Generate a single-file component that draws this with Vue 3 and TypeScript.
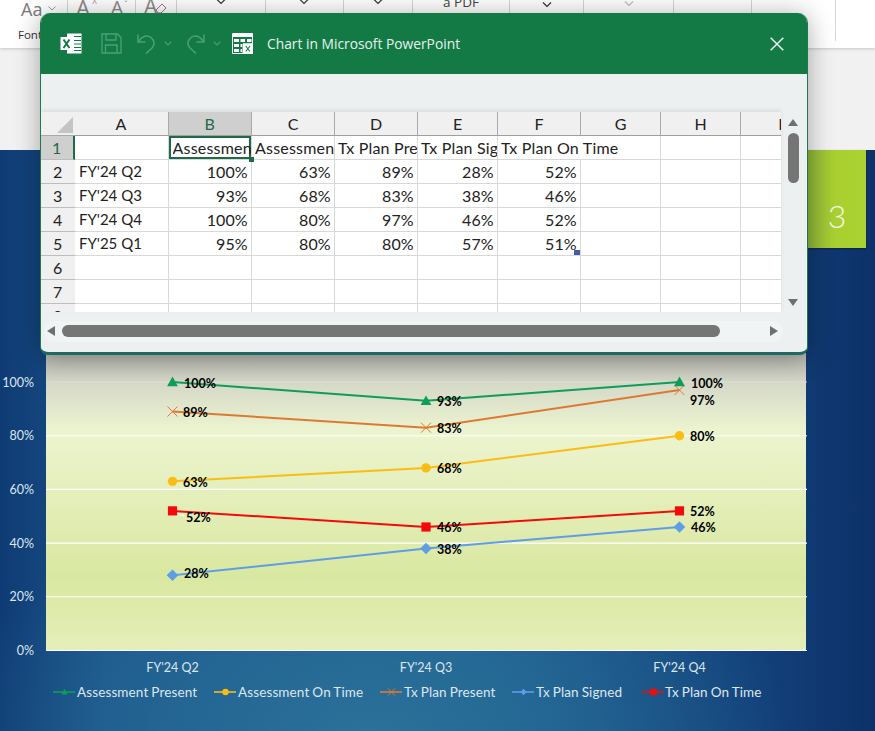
<script setup lang="ts">
const cols = ['A', 'B', 'C', 'D', 'E', 'F', 'G', 'H', 'I']
const rows: string[][] = [
  ['', 'Assessment Present', 'Assessment On Time', 'Tx Plan Present', 'Tx Plan Signed', 'Tx Plan On Time', '', '', ''],
  ["FY'24 Q2", '100%', '63%', '89%', '28%', '52%', '', '', ''],
  ["FY'24 Q3", '93%', '68%', '83%', '38%', '46%', '', '', ''],
  ["FY'24 Q4", '100%', '80%', '97%', '46%', '52%', '', '', ''],
  ["FY'25 Q1", '95%', '80%', '80%', '57%', '51%', '', '', ''],
  ['', '', '', '', '', '', '', '', ''],
  ['', '', '', '', '', '', '', '', ''],
  ['', '', '', '', '', '', '', '', ''],
]
const ribbonGroups = [
  { w: 68, cls: 'g-font', chev: 0 },
  { w: 68, cls: 'g-size', chev: 0 },
  { w: 41, cls: 'g-clear', chev: 0 },
  { w: 89, cls: 'g-chev', chev: 39 },
  { w: 78, cls: 'g-chev', chev: 33 },
  { w: 69, cls: 'g-chev', chev: 29 },
  { w: 97, cls: 'g-pdf', chev: 0 },
  { w: 74, cls: 'g-chev-dark', chev: 32 },
  { w: 90, cls: 'g-chev-light', chev: 40 },
  { w: 78, cls: '', chev: 0 },
  { w: 84, cls: '', chev: 0 },
]

const xs = [172.5, 426, 679.5]
const yOf = (v: number) => 650.5 - v * 2.685
const ticks = [0, 20, 40, 60, 80, 100]
const categories = ["FY'24 Q2", "FY'24 Q3", "FY'24 Q4"]
const leaders = [
  { x1: 174, y1: 511, x2: 184, y2: 516 },
  { x1: 177, y1: 574, x2: 184, y2: 573.5 },
]

interface Series {
  name: string
  color: string
  marker: string
  values: number[]
  labels: [number, number][]
  legendLine: number
  legendText: number
}
const series: Series[] = [
  { name: 'Tx Plan Signed', color: '#5f9ee6', marker: 'diamond', values: [28, 38, 46], labels: [[184, 573], [437, 549], [691, 527]], legendLine: 512, legendText: 536 },
  { name: 'Tx Plan Present', color: '#dd7a32', marker: 'x', values: [89, 83, 97], labels: [[183, 412], [437, 428], [690, 400]], legendLine: 380, legendText: 404 },
  { name: 'Assessment On Time', color: '#fbbc14', marker: 'circle', values: [63, 68, 80], labels: [[183, 482], [437, 468], [690, 436]], legendLine: 214, legendText: 238 },
  { name: 'Tx Plan On Time', color: '#f40a0a', marker: 'square', values: [52, 46, 52], labels: [[186, 517], [437, 527], [690, 511]], legendLine: 642, legendText: 665 },
  { name: 'Assessment Present', color: '#0f9d58', marker: 'triangle', values: [100, 93, 100], labels: [[184, 383], [437, 401], [691, 383]], legendLine: 53, legendText: 77 },
]
const pts = (s: Series) => s.values.map((v, i) => `${xs[i]},${yOf(v)}`).join(' ')
const marker = (kind: string, x: number, y: number, r: number) => {
  switch (kind) {
    case 'triangle': return `M${x} ${y - r}L${x + r} ${y + r * 0.8}L${x - r} ${y + r * 0.8}Z`
    case 'diamond': return `M${x} ${y - r}L${x + r} ${y}L${x} ${y + r}L${x - r} ${y}Z`
    case 'square': return `M${x - r} ${y - r}H${x + r}V${y + r}H${x - r}Z`
    case 'x': return `M${x - r} ${y - r}L${x + r} ${y + r}M${x + r} ${y - r}L${x - r} ${y + r}`
    default: return `M${x - r} ${y}A${r} ${r} 0 1 0 ${x + r} ${y}A${r} ${r} 0 1 0 ${x - r} ${y}Z`
  }
}
const markerSize: Record<string, number> = { x: 5, diamond: 5.8, square: 4.6, circle: 4.7, triangle: 5.4 }
</script>

<template>
  <div class="page">
    <header class="ribbon">
      <div v-for="(g, i) in ribbonGroups" :key="i" class="rgroup" :class="g.cls" :style="{ width: g.w + 'px' }">
        <template v-if="g.cls === 'g-font'">
          <span class="aa">Aa</span>
          <svg class="aa-chev" width="8" height="5" viewBox="0 0 8 5"><path d="M.5.5 4 4 7.5.5" fill="none" stroke="#9a9a9a" /></svg>
          <span class="font-label">Font</span>
        </template>
        <template v-else-if="g.cls === 'g-size'">
          <span class="big-a">A</span><span class="caret">^</span>
          <span class="small-a">A</span><span class="caret small">ˇ</span>
        </template>
        <template v-else-if="g.cls === 'g-clear'">
          <span class="clear-a">A</span>
          <svg class="pen" width="12" height="12" viewBox="0 0 12 12"><path d="M1 8 7 2l4 4-5 5H3Z" fill="none" stroke="#b06a86" /></svg>
        </template>
        <span v-else-if="g.cls === 'g-pdf'" class="pdf">a PDF</span>
        <svg v-else-if="g.chev" class="chev" :class="g.cls" :style="{ left: g.chev + 'px' }" width="10" height="6" viewBox="0 0 10 6"><path d="M1 .5 5 4.5 9 .5" fill="none" stroke="currentColor" stroke-width="1.2" /></svg>
      </div>
    </header>
    <div class="workspace"></div>

    <section class="slide">
      <svg class="chart" width="875" height="581" viewBox="0 150 875 581">
        <defs>
          <linearGradient id="plotFill" x1="0" y1="0" x2="0" y2="1">
            <stop offset="0" stop-color="#b4b5af" />
            <stop offset="0.1" stop-color="#d5d8c8" />
            <stop offset="0.26" stop-color="#ecf4cf" />
            <stop offset="0.55" stop-color="#e2edb4" />
            <stop offset="0.75" stop-color="#d9e8a0" />
            <stop offset="1" stop-color="#e5eeb9" />
          </linearGradient>
        </defs>
        <rect x="46" y="353" width="760" height="297.5" fill="url(#plotFill)" />
        <g v-for="t in ticks" :key="t">
          <line x1="46" x2="807" :y1="yOf(t)" :y2="yOf(t)" :stroke="t === 100 ? '#e3e3dc' : '#ffffff'" :stroke-width="t === 100 ? 0.8 : 1.1" />
          <text class="axis" x="34" :y="yOf(t) + 4.5" text-anchor="end">{{ t }}%</text>
        </g>
        <text v-for="(c, i) in categories" :key="c" class="axis" :x="xs[i]" y="672" text-anchor="middle">{{ c }}</text>

        <line v-for="(l, i) in leaders" :key="i" :x1="l.x1" :y1="l.y1" :x2="l.x2" :y2="l.y2" stroke="#fff" stroke-width="1" />
        <g v-for="s in series" :key="s.name">
          <polyline :points="pts(s)" fill="none" :stroke="s.color" stroke-width="2" />
          <g v-for="(v, i) in s.values" :key="i">
            <path
              :d="marker(s.marker, xs[i], yOf(v), markerSize[s.marker])"
              :fill="s.marker === 'x' ? 'none' : s.color"
              :stroke="s.marker === 'x' ? s.color : 'none'"
            />
            <text class="dlabel" :x="s.labels[i][0]" :y="s.labels[i][1] + 4.5">{{ v }}%</text>
          </g>
          <line :x1="s.legendLine" :x2="s.legendLine + 22" y1="692" y2="692" :stroke="s.color" stroke-width="1.6" />
          <path
            :d="marker(s.marker, s.legendLine + 11.5, 692, s.marker === 'x' ? 3.5 : 3.2)"
            :fill="s.marker === 'x' ? 'none' : s.color"
            :stroke="s.marker === 'x' ? s.color : 'none'"
          />
          <text class="legend" :x="s.legendText" y="696.5">{{ s.name }}</text>
        </g>
      </svg>
      <div class="tab">3</div>
    </section>

    <div class="window">
      <div class="titlebar">
        <svg class="tb-excel" width="22" height="21" viewBox="0 0 22 21">
          <path d="M7 0.5H21.5V20.5H7Z" fill="#fff" />
          <path d="M14 3.5H21M14 7.5H21M14 11H21M14 14.5H21M14 17.5H21" stroke="#137a46" stroke-width="1" />
          <path d="M0.5 4H13V17H0.5Z" fill="#fff" />
          <path d="M3.5 6.5 9.5 15M9.5 6.5 3.5 15" stroke="#137a46" stroke-width="2" />
        </svg>
        <svg class="tb-save" width="21" height="21" viewBox="0 0 21 21" fill="none" stroke="#4aa178" stroke-width="1.3">
          <path d="M1 1H16.5L20 4.5V20H1Z" />
          <path d="M5 1V7H15V1M4.5 20V12H16V20" />
        </svg>
        <svg class="tb-undo" width="19" height="21" viewBox="0 0 19 21" fill="none" stroke="#4aa178" stroke-width="1.5">
          <path d="M1 1.5V9H8.5" />
          <path d="M1.5 8.5C5 3 10 1.5 14 4.5C18 8 18 12 15 15L9 20.5" />
        </svg>
        <svg class="tb-drop" width="8" height="5" viewBox="0 0 8 5"><path d="M.7.7 4 4 7.3.7" fill="none" stroke="#4aa178" stroke-width="1.1" /></svg>
        <svg class="tb-redo" width="19" height="21" viewBox="0 0 19 21" fill="none" stroke="#4aa178" stroke-width="1.5">
          <path d="M18 1.5V9H10.5" />
          <path d="M17.5 8.5C14 3 9 1.5 5 4.5C1 8 1 12 4 15L10 20.5" />
        </svg>
        <svg class="tb-drop" width="8" height="5" viewBox="0 0 8 5"><path d="M.7.7 4 4 7.3.7" fill="none" stroke="#4aa178" stroke-width="1.1" /></svg>
        <svg class="tb-sheet" width="21" height="21" viewBox="0 0 21 21">
          <path d="M.5.5H20.5V11H11V20.5H.5Z" fill="none" stroke="#fff" />
          <path d="M.5 1H20.5V4H.5ZM2 6H7V9H2ZM8.5 6H13V9H8.5ZM15 6H19.5V9H15ZM2 11H7V14H2ZM2 16H7V19H2ZM8.5 11H10V14H8.5ZM8.5 16H10V19H8.5Z" fill="#fff" />
          <path d="M11 10.5H21V21H11Z" fill="#fff" />
          <path d="M13.7 13 18 18.5M18 13 13.7 18.5" stroke="#137a46" stroke-width="1.1" />
        </svg>
        <span class="tb-title">Chart in Microsoft PowerPoint</span>
        <svg class="tb-close" width="14" height="14" viewBox="0 0 14 14"><path d="M.7.7 13.3 13.3M13.3.7.7 13.3" stroke="#eaf4ee" stroke-width="1.5" /></svg>
      </div>
      <div class="panel"></div>

      <div class="sheet-row">
        <div class="sheet">
          <div class="corner"><span class="corner-tri"></span></div>
          <div v-for="(c, i) in cols" :key="c" class="chead" :class="{ selected: i === 1 }">{{ c }}</div>
          <template v-for="(row, r) in rows" :key="r">
            <div class="rhead" :class="{ selected: r === 0 }">{{ r + 1 }}</div>
            <div
              v-for="(val, c) in row"
              :key="c"
              class="cell"
              :class="{
                num: r > 0 && c > 0,
                active: r === 0 && c === 1,
                spill: r === 0 && c === 5,
                lead: r === 0 && c > 0,
                last: r === 4 && c === 5,
              }"
            >
              <span class="cell-text">{{ val }}</span>
            </div>
          </template>
        </div>
        <div class="vscroll">
          <span class="arrow up"></span>
          <span class="vthumb"></span>
          <span class="arrow down"></span>
        </div>
      </div>
      <div class="hscroll">
        <div class="htrack">
          <span class="arrow left"></span>
          <span class="hthumb"></span>
          <span class="arrow right"></span>
        </div>
      </div>
    </div>
  </div>
</template>

<style>
html, body { margin: 0; padding: 0; background: #0f3a73; }
</style>

<style scoped>
.page {
  position: relative;
  width: 875px;
  height: 731px;
  overflow: hidden;
  display: flex;
  flex-direction: column;
  font-family: "Open Sans", "Liberation Sans", sans-serif;
}

/* ribbon */
.ribbon {
  display: flex;
  height: 48px;
  flex: none;
  background: #fff;
  box-shadow: 0 1px 3px rgba(0, 0, 0, .18);
  position: relative;
  z-index: 1;
  overflow: hidden;
}
.rgroup {
  position: relative;
  flex: none;
  box-sizing: border-box;
  height: 41px;
  border-right: 1px solid #d6d6d6;
  font-family: "Open Sans", sans-serif;
}
.aa { position: absolute; left: 21px; top: -3px; font-size: 18px; color: #7a7a7a; }
.aa-chev { position: absolute; left: 48px; top: 6px; }
.font-label { position: absolute; left: 18px; top: 27px; font-size: 11.5px; color: #333; }
.big-a { position: absolute; left: 8px; top: -8px; font-size: 22px; color: #8a8a8a; }
.small-a { position: absolute; left: 43px; top: -6px; font-size: 19px; color: #8a8a8a; }
.caret { position: absolute; left: 24px; top: -4px; font-size: 9px; color: #8a8a8a; }
.caret.small { left: 56px; top: -2px; }
.clear-a { position: absolute; left: 8px; top: -8px; font-size: 21px; color: #8a8a8a; }
.pen { position: absolute; left: 19px; top: 2px; }
.chev { position: absolute; top: -1px; color: #333; }
.chev.g-chev-dark { top: 2px; }
.chev.g-chev-light { top: 1px; color: #bdbdbd; }
.pdf { position: absolute; left: 30px; top: -7px; font-size: 13.5px; color: #444; }
.workspace { height: 102px; flex: none; background: #f1f1f1; }

/* slide */
.slide {
  position: relative;
  flex: 1;
  background:
    radial-gradient(ellipse 420px 260px at 370px 590px, #2b7199 0%, rgba(43, 113, 153, .55) 50%, rgba(43, 113, 153, 0) 100%),
    linear-gradient(90deg, #0f3b74 0%, #1a548a 12%, #1a5a90 55%, #123f78 88%, #0d3168 100%);
}
.chart { display: block; }
.axis { font-family: "Lato", sans-serif; font-size: 12.5px; fill: #dce6ef; }
.legend { font-family: "Lato", sans-serif; font-size: 13.5px; fill: #dde7ef; letter-spacing: .12px; word-spacing: -.6px; }
.dlabel { font-family: "Lato", sans-serif; font-size: 12.5px; font-weight: 700; fill: #000; }
.tab {
  position: absolute;
  left: 808px;
  top: 0;
  width: 58px;
  height: 98px;
  box-sizing: border-box;
  padding-top: 47px;
  text-align: center;
  font-family: "Lato", sans-serif;
  font-weight: 300;
  font-size: 32px;
  line-height: 38px;
  color: #f4f8e6;
  background: linear-gradient(90deg, #8fb53b 0%, #a8cf30 45%, #abd32e 100%);
  box-shadow: 0 1px 2px rgba(0, 0, 0, .35);
}

/* window */
.window {
  position: absolute;
  left: 40px;
  top: 13px;
  width: 768px;
  height: 342px;
  box-sizing: border-box;
  border-radius: 10px 10px 8px 8px;
  background: #ecf0f1;
  border-left: 1px solid #1c7a4c;
  border-right: 1px solid #1c7a4c;
  border-bottom: 3px solid #1d6a62;
  box-shadow: 0 2px 26px rgba(0, 0, 0, .33);
  overflow: hidden;
  z-index: 2;
  display: flex;
  flex-direction: column;
}
.titlebar {
  height: 61px;
  flex: none;
  background: #137a46;
  margin: 0 -1px;
  display: flex;
  align-items: center;
  padding-left: 20px;
  box-sizing: border-box;
}
.tb-excel { margin-right: 19px; }
.tb-save { margin-right: 15px; }
.tb-undo { margin-right: 8px; }
.tb-drop { margin-right: 14px; }
.tb-redo { margin-right: 8px; }
.tb-drop + .tb-redo { margin-left: 0; }
.tb-sheet { margin-left: -3px; margin-right: 14px; }
.tb-title { color: #e7f3ec; font-size: 13.8px; }
.tb-close { margin-left: auto; margin-right: 24px; }
.panel { height: 38px; flex: none; background: #ecf0f1; }

.sheet-row { display: flex; height: 200px; flex: none; }
.sheet {
  width: 740px;
  flex: none;
  height: 200px;
  overflow: hidden;
  display: grid;
  grid-template-columns: 33.5px 94px 83.5px 83px 83px 80px 83px 80px 80px 80px;
  grid-auto-rows: 24px;
  grid-template-rows: 23.5px;
  background: #fff;
  font-family: "Lato", sans-serif;
  font-size: 16px;
  color: #222;
  box-shadow: 0 -2px 4px rgba(0, 0, 0, .08);
}
.corner { background: #f0f0f0; border-bottom: 1px solid #a9a9a9; position: relative; }
.corner-tri {
  position: absolute;
  right: 2px;
  bottom: 2px;
  width: 0;
  height: 0;
  border-left: 16px solid transparent;
  border-bottom: 16px solid #c4c4c4;
}
.chead {
  background: #f0f0f0;
  border-bottom: 1px solid #9f9f9f;
  border-right: 1px solid #a9a9a9;
  box-sizing: border-box;
  display: flex;
  align-items: center;
  justify-content: center;
}
.chead.selected { background: #cfcfcf; color: #1e6b47; }
.rhead {
  background: #f0f0f0;
  border-bottom: 1px solid #bdbdbd;
  box-sizing: border-box;
  display: flex;
  align-items: center;
  justify-content: center;
}
.rhead.selected { background: #cfcfcf; color: #1e6b47; border-right: 2px solid #1e6b47; }
.cell {
  position: relative;
  box-sizing: border-box;
  border-right: 1px solid #d8d8d8;
  border-bottom: 1px solid #d8d8d8;
  padding: 0 3.5px 0 4.5px;
  line-height: 23px;
  white-space: nowrap;
  overflow: hidden;
  font-size: 15px;
}
.cell.num { text-align: right; font-size: 16px; }
.cell.lead { padding: 0 0 0 3px; font-size: 16px; letter-spacing: .2px; }
.cell.spill { overflow: visible; border-right-color: transparent; z-index: 1; }
.cell.active {
  overflow: visible;
  box-shadow: inset 0 0 0 2px #1e6b47;
  padding-left: 4px;
}
.cell.active .cell-text { display: block; overflow: hidden; }
.cell.active::after {
  content: "";
  position: absolute;
  right: -3px;
  bottom: -3px;
  width: 5px;
  height: 5px;
  background: #1e6b47;
  z-index: 2;
}
.cell.last { overflow: visible; }
.cell.last::after {
  content: "";
  position: absolute;
  right: 0;
  bottom: 0;
  width: 6px;
  height: 5px;
  background: #4a5aa8;
}

.vscroll {
  position: relative;
  flex: 1;
  display: flex;
  flex-direction: column;
  align-items: center;
  padding-right: 1px;
}
.vthumb {
  position: absolute;
  top: 21px;
  left: 7px;
  width: 11px;
  height: 50px;
  border-radius: 5.5px;
  background: #757575;
}
.arrow { position: absolute; width: 0; height: 0; }
.arrow.up { top: 7px; left: 7px; border: 5.5px solid transparent; border-top: 0; border-bottom: 7px solid #6f6f6f; }
.arrow.down { top: 187px; left: 7px; border: 5.5px solid transparent; border-bottom: 0; border-top: 7px solid #6f6f6f; }
.hscroll { flex: 1; padding: 9px 24px 0 3px; }
.htrack {
  position: relative;
  height: 21px;
  border-radius: 10px;
  background: #f1f4f5;
}
.hthumb {
  position: absolute;
  left: 18px;
  top: 4px;
  width: 658px;
  height: 12px;
  border-radius: 6px;
  background: #757575;
}
.arrow.left { left: 3px; top: 5px; border: 5.5px solid transparent; border-left: 0; border-right: 8px solid #6f6f6f; }
.arrow.right { left: 726px; top: 5px; border: 5.5px solid transparent; border-right: 0; border-left: 8px solid #6f6f6f; }
</style>
